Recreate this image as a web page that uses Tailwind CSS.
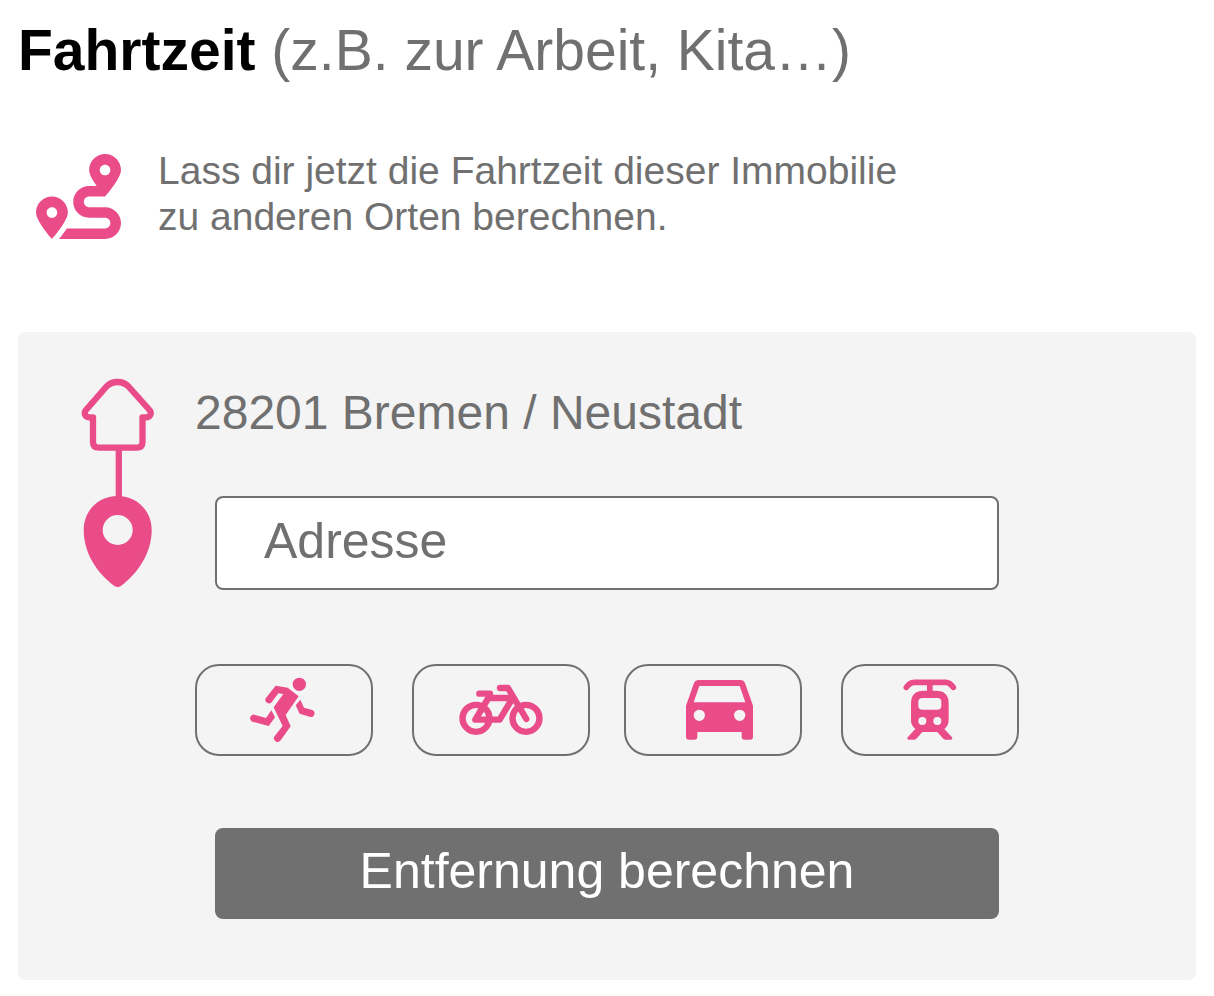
<!DOCTYPE html>
<html lang="de">
  <head>
    <meta charset="UTF-8" />
    <meta name="viewport" content="width=device-width, initial-scale=1.0" />
    <title>Fahrtzeit</title>
    <script src="https://cdn.jsdelivr.net/npm/@tailwindcss/browser@4"></script>
  </head>
  <body
    class="bg-white px-[18px] py-4 font-['Liberation_Sans',Arial,sans-serif] text-[#707070]"
  >
    <h1 class="text-[57px] leading-[68px]">
      <span class="font-bold text-black">Fahrtzeit</span>
      (z.B. zur Arbeit, Kita…)
    </h1>

    <div class="mt-16 flex items-start pl-[18px]">
      <svg
        class="mt-[6px] size-[85px] shrink-0 fill-[#ea4c89]"
        viewBox="0 0 512 512"
        aria-hidden="true"
      >
        <path
          d="M416 320h-96c-17.6 0-32-14.4-32-32s14.4-32 32-32h96s96-107 96-160-43-96-96-96-96 43-96 96c0 25.5 22.2 63.4 45.3 96H320c-52.9 0-96 43.1-96 96s43.1 96 96 96h96c17.6 0 32 14.4 32 32s-14.4 32-32 32H185.5c-16 24.8-33.8 47.7-47.3 64H416c52.9 0 96-43.1 96-96s-43.1-96-96-96zm0-256c17.7 0 32 14.3 32 32s-14.3 32-32 32-32-14.3-32-32 14.3-32 32-32zM96 256c-53 0-96 43-96 96s96 160 96 160 96-107 96-160-43-96-96-96zm0 128c-17.7 0-32-14.3-32-32s14.3-32 32-32 32 14.3 32 32-14.3 32-32 32z"
        />
      </svg>
      <p class="ml-[37px] text-[39px] leading-[46px]">
        Lass dir jetzt die Fahrtzeit dieser Immobilie<br />
        zu anderen Orten berechnen.
      </p>
    </div>

    <form
      class="mt-[92px] flex items-start rounded-lg bg-[#f4f4f4] pt-11 pr-[177px] pb-[61px]"
    >
      <!-- House connected to destination pin -->
      <div class="w-[177px] shrink-0 pl-[62px]">
        <svg
          class="h-[214px] w-[76px]"
          viewBox="0 0 76 214"
          fill="none"
          aria-hidden="true"
        >
          <g stroke="#ea4c89" stroke-width="6.3" stroke-linejoin="round">
            <path
              d="M37.5 6C33 6 29.5 7.5 26.5 10.5L6 34C3.5 37 5 41.3 9.5 41.3H13V66Q13 71.7 19 71.7H56.5Q62.5 71.7 62.5 66V41.3H66C70.5 41.3 72 37 69.5 34L48.5 10.5C45.5 7.5 42 6 37.5 6Z"
            />
            <path d="M38.8 72V124" />
          </g>
          <path
            fill="#ea4c89"
            fill-rule="evenodd"
            d="M37.7 120C18 120 3.7 135 3.7 154C3.7 177 17 197 34.5 210Q37.7 212 41 210C58 197 71.7 177 71.7 154C71.7 135 57 120 37.7 120ZM37.7 139a15 15 0 1 1 0 30a15 15 0 1 1 0-30Z"
          />
        </svg>
      </div>

      <div class="min-w-0 flex-1 pt-[9px]">
        <label for="address" class="block text-[48px] leading-[56px]"
          >28201 Bremen / Neustadt</label
        >
        <div class="mt-[55px] px-5">
          <input
            type="text"
            id="address"
            placeholder="Adresse"
            class="block h-[94px] w-full rounded-lg border-2 border-[#707070] bg-white px-[47px] pb-1 text-[50px] placeholder:text-[#707070] placeholder:opacity-100"
          />
        </div>

        <div class="mt-[74px] grid grid-cols-2 gap-[34px]">
          <div class="grid grid-cols-2 gap-[39px]">
            <button
              type="button"
              aria-label="Zu Fuß"
              class="flex h-[92px] items-center justify-center rounded-3xl border-2 border-[#707070]"
            >
              <svg
                class="h-[66px] w-[70px] fill-[#ea4c89]"
                viewBox="177 66 210 198"
              >
                <circle cx="328" cy="88" r="20" />
                <path
                  d="M257 92L293 98L326 124L287 180L302 214L272 256A11 11 0 0 1 254 243L278 213L251 157L280 117L265 115L245 142A11 11 0 0 1 227 130Z"
                />
                <path
                  d="M331 134L342 158L367 165A11 11 0 0 1 362 186L329 176L317 151Z"
                />
                <path
                  d="M244 166L255 187L236 213L187 200A11 11 0 0 1 193 179L228 189Z"
                />
              </svg>
            </button>
            <button
              type="button"
              aria-label="Fahrrad"
              class="flex h-[92px] items-center justify-center rounded-3xl border-2 border-[#707070]"
            >
              <svg
                class="h-[66px] w-[84px] fill-none stroke-[#ea4c89]"
                viewBox="161 66 252 198"
                stroke-width="19"
                stroke-linecap="round"
                stroke-linejoin="round"
              >
                <circle cx="212" cy="190" r="40.5" />
                <circle cx="362" cy="190" r="40.5" />
                <path d="M222 116H254L249 129L210 194H283L322 129H249" />
                <path d="M284 99H308L363 192" />
              </svg>
            </button>
          </div>
          <div class="grid grid-cols-2 gap-[39px]">
            <button
              type="button"
              aria-label="Auto"
              class="flex h-[92px] items-center justify-center rounded-3xl border-2 border-[#707070]"
            >
              <svg
                class="h-[66px] w-[80px] fill-[#ea4c89]"
                viewBox="159 66 240 198"
              >
                <path
                  fill-rule="evenodd"
                  d="M237 75H362Q371 75 375 84L399 152V245Q399 254 390 254H374Q365 254 365 245V231H232V245Q232 254 223 254H207Q198 254 198 245V152L222 84Q226 75 237 75ZM238 93H359L376 142H221ZM238 164a17 17 0 1 1 0 34a17 17 0 1 1 0-34ZM359 164a17 17 0 1 1 0 34a17 17 0 1 1 0-34Z"
                />
              </svg>
            </button>
            <button
              type="button"
              aria-label="Bahn"
              class="flex h-[92px] items-center justify-center rounded-3xl border-2 border-[#707070]"
            >
              <svg
                class="h-[66px] w-[54px] fill-[#ea4c89]"
                viewBox="206 66 162 198"
              >
                <path
                  d="M216 97C223 87 229 82 240 82H334C344 82 350 87 357 97M286.5 82V112"
                  fill="none"
                  stroke="#ea4c89"
                  stroke-width="17"
                  stroke-linecap="round"
                />
                <path
                  fill-rule="evenodd"
                  d="M268 107H305Q343 107 343 145V195Q343 212 330 222L353 247Q356 254 349 254H335Q330 254 327 251L309 231H264L246 251Q243 254 238 254H224Q217 254 220 247L243 222Q230 212 230 195V145Q230 107 268 107ZM264 129Q252 129 252 141V152Q252 164 264 164H309Q321 164 321 152V141Q321 129 309 129ZM264 186a12 12 0 1 1 0 24a12 12 0 1 1 0-24ZM309 186a12 12 0 1 1 0 24a12 12 0 1 1 0-24Z"
                />
              </svg>
            </button>
          </div>
        </div>

        <div class="mt-[72px] px-5">
          <button
            type="submit"
            class="block h-[91px] w-full rounded-lg bg-[#707070] pb-1 text-[50px] text-white"
          >
            Entfernung berechnen
          </button>
        </div>
      </div>
    </form>
  </body>
</html>
